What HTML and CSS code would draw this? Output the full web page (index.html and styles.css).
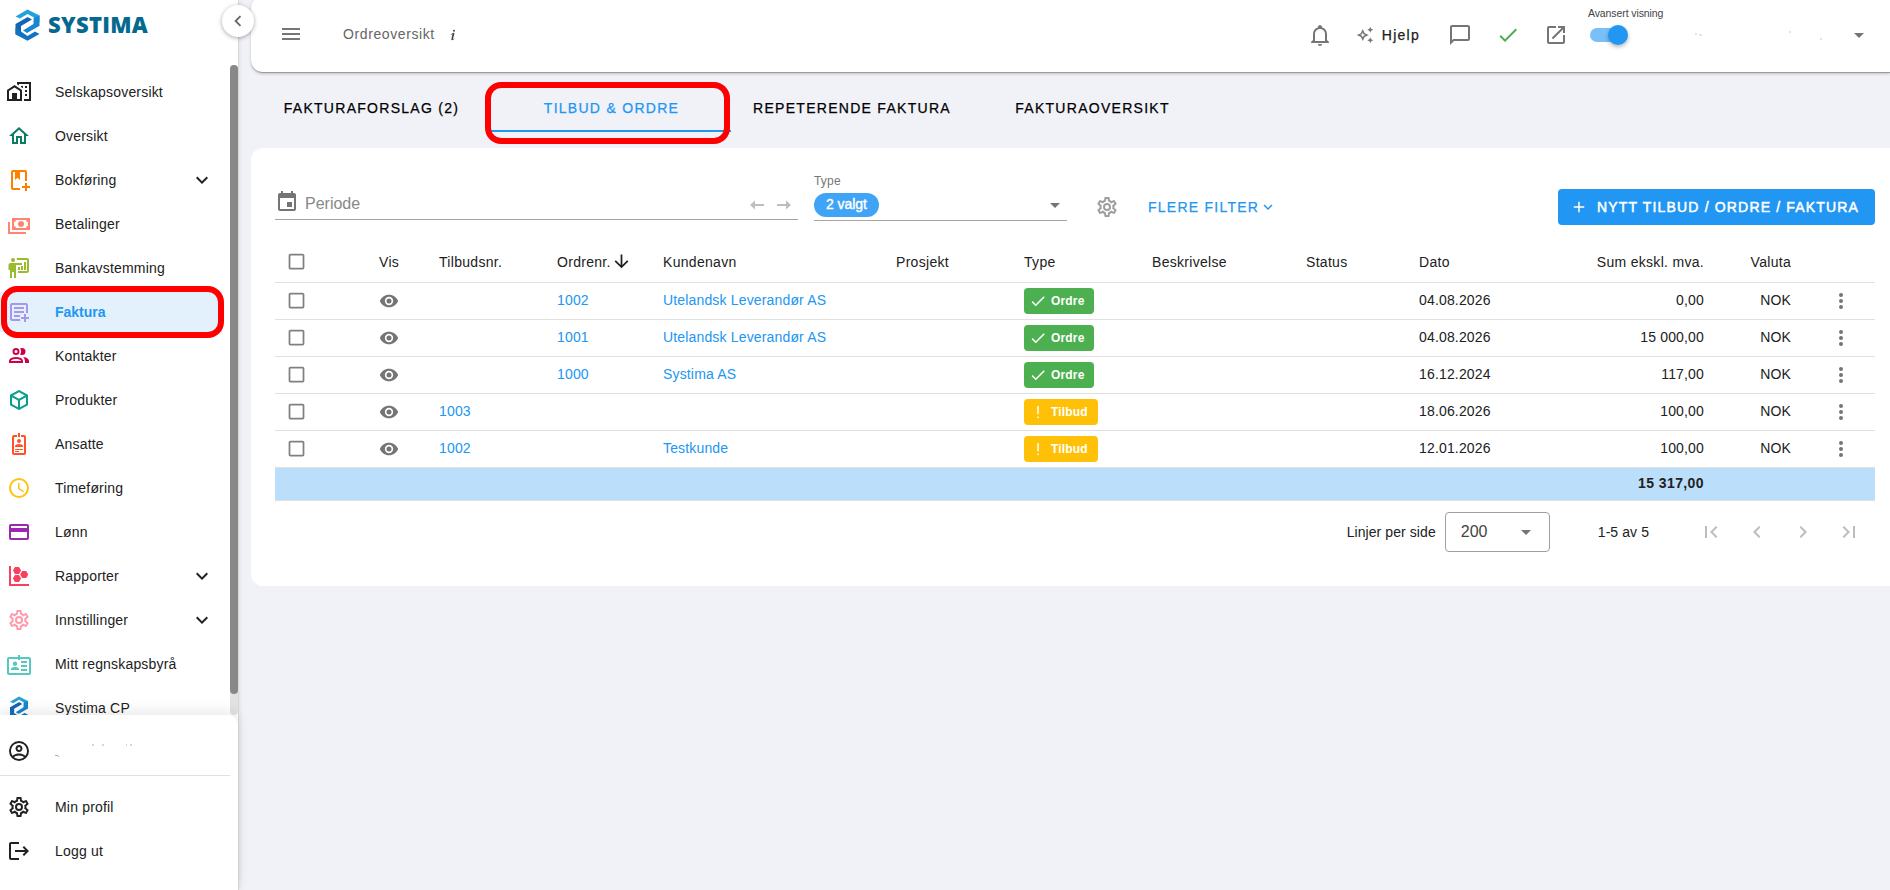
FILE: index.html
```html
<!DOCTYPE html>
<html lang="no">
<head>
    <meta charset="UTF-8">
    <meta name="viewport" content="width=device-width, initial-scale=1.0">
    <title>Systima - Ordreoversikt</title>
    <link rel="stylesheet" href="styles.css">
</head>
<body>

<!-- Icon sprite -->
<svg class="sprite" xmlns="http://www.w3.org/2000/svg">
    <symbol id="city" viewBox="0 0 24 24"><path d="M10 2V4.26L12 5.59V4H22V19H17V21H24V2H10M7.5 5L0 10V21H15V10L7.5 5M14 6V6.93L15.61 8H16V6H14M18 6V8H20V6H18M7.5 7.5L13 11V19H10V13H5V19H2V11L7.5 7.5M18 10V12H20V10H18M18 14V16H20V14H18Z"/></symbol>
    <symbol id="home" viewBox="0 0 24 24"><path d="M12 5.69L17 10.19V18H15V12H9V18H7V10.19L12 5.69M12 3L2 12H5V20H11V14H13V20H19V12H22"/></symbol>
    <symbol id="book" viewBox="0 0 24 24"><path d="M18 2H6C4.9 2 4 2.9 4 4V20C4 21.1 4.9 22 6 22H13V20H6V4H8V12L10.5 9.75L13 12V4H18V13H20V4C20 2.9 19.1 2 18 2M18 15V18H15V20H18V23H20V20H23V18H20V15Z"/></symbol>
    <symbol id="cash" viewBox="0 0 24 24"><path d="M5 6H23V18H5V6M14 9A3 3 0 0 1 17 12A3 3 0 0 1 14 15A3 3 0 0 1 11 12A3 3 0 0 1 14 9M9 8A2 2 0 0 1 7 10V14A2 2 0 0 1 9 16H19A2 2 0 0 1 21 14V10A2 2 0 0 1 19 8H9M1 10H3V20H19V22H1V10Z"/></symbol>
    <symbol id="board" viewBox="0 0 24 24"><path d="M20 17A2 2 0 0 0 22 15V4A2 2 0 0 0 20 2H9.46C9.81 2.61 10 3.3 10 4H20V15H11V17M15 7V9H9V22H7V16H5V22H3V14H1.5V9A2 2 0 0 1 3.5 7H15M8 4A2 2 0 0 1 6 6A2 2 0 0 1 4 4A2 2 0 0 1 6 2A2 2 0 0 1 8 4M17 6H19V14H17V6M14 10H16V14H14V10M11 11H13V14H11V11Z"/></symbol>
    <symbol id="invoice" viewBox="0 0 24 24"><path d="M5 3C3.9 3 3 3.9 3 5V19C3 20.1 3.9 21 5 21H13.35A6 6 0 0 1 13.09 19H5V5H19V13.09A6 6 0 0 1 21 13.35V5C21 3.9 20.1 3 19 3H5M7 7V9H17V7H7M7 11V13H17V11H7M7 15V17H13V15H7M17 14V17H14V19H17V22H19V19H22V17H19V14H17"/></symbol>
    <symbol id="people" viewBox="0 0 24 24"><path d="M13.07 10.41A5 5 0 0 0 13.07 4.59A3.39 3.39 0 0 1 15 4A3.5 3.5 0 0 1 15 11A3.39 3.39 0 0 1 13.07 10.41M5.5 7.5A3.5 3.5 0 1 1 9 11A3.5 3.5 0 0 1 5.5 7.5M7.5 7.5A1.5 1.5 0 1 0 9 6A1.5 1.5 0 0 0 7.5 7.5M16 17V19H2V17S2 13 9 13S16 17 16 17M14 17C13.86 16.22 12.67 15 9 15S4.07 16.31 4 17M15.95 13A5.32 5.32 0 0 1 18 17V19H22V17S22 13.37 15.94 13Z"/></symbol>
    <symbol id="cube" viewBox="0 0 24 24"><path d="M21 16.5C21 16.88 20.79 17.21 20.47 17.38L12.57 21.82C12.41 21.94 12.21 22 12 22C11.79 22 11.59 21.94 11.43 21.82L3.53 17.38C3.21 17.21 3 16.88 3 16.5V7.5C3 7.12 3.21 6.79 3.53 6.62L11.43 2.18C11.59 2.06 11.79 2 12 2C12.21 2 12.41 2.06 12.57 2.18L20.47 6.62C20.79 6.79 21 7.12 21 7.5V16.5M12 4.15L6.04 7.5L12 10.85L17.96 7.5L12 4.15M5 15.91L11 19.29V12.58L5 9.21V15.91M19 15.91V9.21L13 12.58V19.29L19 15.91Z"/></symbol>
    <symbol id="badge" viewBox="0 0 24 24"><path d="M17 3H14V5H17V21H7V5H10V3H7A2 2 0 0 0 5 5V21A2 2 0 0 0 7 23H17A2 2 0 0 0 19 21V5A2 2 0 0 0 17 3M12 7A2 2 0 0 1 14 9A2 2 0 0 1 12 11A2 2 0 0 1 10 9A2 2 0 0 1 12 7M16 15H8V14C8 12.67 10.67 12 12 12C13.33 12 16 12.67 16 14V15M16 18H8V17H16V18M12 20H8V19H12V20M13 5H11V1H13V5Z"/></symbol>
    <symbol id="clock" viewBox="0 0 24 24"><path d="M12 20A8 8 0 0 0 20 12A8 8 0 0 0 12 4A8 8 0 0 0 4 12A8 8 0 0 0 12 20M12 2A10 10 0 0 1 22 12A10 10 0 0 1 12 22A10 10 0 0 1 2 12A10 10 0 0 1 12 2M12.5 7V12.25L17 14.92L16.25 16.15L11 13V7H12.5Z"/></symbol>
    <symbol id="card" viewBox="0 0 24 24"><path d="M20 4H4C2.89 4 2 4.89 2 6V18C2 19.11 2.89 20 4 20H20C21.11 20 22 19.11 22 18V6C22 4.89 21.11 4 20 4M20 18H4V12H20V18M20 8H4V6H20V8Z"/></symbol>
    <symbol id="chart" viewBox="0 0 24 24"><path d="M2 2H4V20H22V22H2V2M14 14.5L12 18H7.94L5.92 14.5L7.94 11H12L14 14.5M14.08 6.5L12.06 10H8L6 6.5L8 3H12.06L14.08 6.5M21.25 10.5L19.23 14H15.19L13.17 10.5L15.19 7H19.23L21.25 10.5Z"/></symbol>
    <symbol id="cog" viewBox="0 0 24 24"><path d="M12 8A4 4 0 0 1 16 12A4 4 0 0 1 12 16A4 4 0 0 1 8 12A4 4 0 0 1 12 8M12 10A2 2 0 0 0 10 12A2 2 0 0 0 12 14A2 2 0 0 0 14 12A2 2 0 0 0 12 10M10 22C9.75 22 9.54 21.82 9.5 21.58L9.13 18.93C8.5 18.68 7.96 18.34 7.44 17.94L4.95 18.95C4.73 19.03 4.46 18.95 4.34 18.73L2.34 15.27C2.21 15.05 2.27 14.78 2.46 14.63L4.57 12.97L4.5 12L4.57 11L2.46 9.37C2.27 9.22 2.21 8.95 2.34 8.73L4.34 5.27C4.46 5.05 4.73 4.96 4.95 5.05L7.44 6.05C7.96 5.66 8.5 5.32 9.13 5.07L9.5 2.42C9.54 2.18 9.75 2 10 2H14C14.25 2 14.46 2.18 14.5 2.42L14.87 5.07C15.5 5.32 16.04 5.66 16.56 6.05L19.05 5.05C19.27 4.96 19.54 5.05 19.66 5.27L21.66 8.73C21.79 8.95 21.73 9.22 21.54 9.37L19.43 11L19.5 12L19.43 13L21.54 14.63C21.73 14.78 21.79 15.05 21.66 15.27L19.66 18.73C19.54 18.95 19.27 19.04 19.05 18.95L16.56 17.95C16.04 18.34 15.5 18.68 14.87 18.93L14.5 21.58C14.46 21.82 14.25 22 14 22H10M11.25 4L10.88 6.61C9.68 6.86 8.62 7.5 7.85 8.39L5.44 7.35L4.69 8.65L6.8 10.2C6.4 11.37 6.4 12.64 6.8 13.8L4.68 15.36L5.43 16.66L7.86 15.62C8.63 16.5 9.68 17.14 10.87 17.38L11.24 20H12.76L13.13 17.39C14.32 17.14 15.37 16.5 16.14 15.62L18.57 16.66L19.32 15.36L17.2 13.81C17.6 12.64 17.6 11.37 17.2 10.2L19.31 8.65L18.56 7.35L16.15 8.39C15.38 7.5 14.32 6.86 13.12 6.62L12.75 4H11.25Z"/></symbol>
    <symbol id="idcard" viewBox="0 0 24 24"><path d="M22 5H13V3H11V5H2A2 2 0 0 0 0 7V21A2 2 0 0 0 2 23H22A2 2 0 0 0 24 21V7A2 2 0 0 0 22 5M22 21H2V7H11V8H13V7H22V21M14 9H20V11H14V9M14 13H20V15H14V13M14 17H20V19H14V17M8 9.5A2.2 2.2 0 0 1 8 13.9A2.2 2.2 0 0 1 8 9.5M4 18V17C4 15.6 6.6 15 8 15S12 15.6 12 17V18H4Z"/></symbol>
    <symbol id="account" viewBox="0 0 24 24"><path d="M12 2A10 10 0 0 0 2 12A10 10 0 0 0 12 22A10 10 0 0 0 22 12A10 10 0 0 0 12 2M7.07 18.28C7.5 17.38 10.12 16.5 12 16.5C13.88 16.5 16.5 17.38 16.93 18.28C15.57 19.36 13.86 20 12 20C10.14 20 8.43 19.36 7.07 18.28M18.36 16.83C16.93 15.09 13.46 14.5 12 14.5C10.54 14.5 7.07 15.09 5.64 16.83C4.62 15.5 4 13.82 4 12C4 7.59 7.59 4 12 4C16.41 4 20 7.59 20 12C20 13.82 19.38 15.5 18.36 16.83M12 6C10.06 6 8.5 7.56 8.5 9.5C8.5 11.44 10.06 13 12 13C13.94 13 15.5 11.44 15.5 9.5C15.5 7.56 13.94 6 12 6M12 11A1.5 1.5 0 0 1 10.5 9.5A1.5 1.5 0 0 1 12 8A1.5 1.5 0 0 1 13.5 9.5A1.5 1.5 0 0 1 12 11Z"/></symbol>
    <symbol id="logout" viewBox="0 0 24 24"><path d="M17 7L15.59 8.41L18.17 11H8V13H18.17L15.59 15.58L17 17L22 12M4 5H12V3H4C2.9 3 2 3.9 2 5V19C2 20.1 2.9 21 4 21H12V19H4V5Z"/></symbol>
    <symbol id="bell" viewBox="0 0 24 24"><path d="M10 21H14C14 22.1 13.1 23 12 23S10 22.1 10 21M21 19V20H3V19L5 17V11C5 7.9 7.03 5.17 10 4.29V4C10 2.9 10.9 2 12 2S14 2.9 14 4V4.29C16.97 5.17 19 7.9 19 11V17L21 19M17 11C17 8.24 14.76 6 12 6S7 8.24 7 11V18H17V11Z"/></symbol>
    <symbol id="sparkle" viewBox="0 0 24 24"><path d="M9 4L11.5 9.5L17 12L11.5 14.5L9 20L6.5 14.5L1 12L6.5 9.5L9 4M9 8.8L8 11L5.8 12L8 13L9 15.2L10 13L12.2 12L10 11L9 8.8M19 1L20.2 3.8L23 5L20.2 6.2L19 9L17.8 6.2L15 5L17.8 3.8L19 1M19 15L20.2 17.8L23 19L20.2 20.2L19 23L17.8 20.2L15 19L17.8 17.8L19 15Z"/></symbol>
    <symbol id="message" viewBox="0 0 24 24"><path d="M20 2H4C2.9 2 2 2.9 2 4V22L6 18H20C21.1 18 22 17.1 22 16V4C22 2.9 21.1 2 20 2M20 16H5.17L4 17.17V4H20V16Z"/></symbol>
    <symbol id="check" viewBox="0 0 24 24"><path d="M21 7L9 19L3.5 13.5L4.91 12.09L9 16.17L19.59 5.59L21 7Z"/></symbol>
    <symbol id="open" viewBox="0 0 24 24"><path d="M14 3V5H17.59L7.76 14.83L9.17 16.24L19 6.41V10H21V3M19 19H5V5H12V3H5C3.89 3 3 3.9 3 5V19A2 2 0 0 0 5 21H19A2 2 0 0 0 21 19V12H19V19Z"/></symbol>
    <symbol id="left" viewBox="0 0 24 24"><path d="M15.41 16.58L10.83 12L15.41 7.41L14 6L8 12L14 18L15.41 16.58Z"/></symbol>
    <symbol id="right" viewBox="0 0 24 24"><path d="M8.59 16.58L13.17 12L8.59 7.41L10 6L16 12L10 18L8.59 16.58Z"/></symbol>
    <symbol id="down" viewBox="0 0 24 24"><path d="M7.41 8.58L12 13.17L16.59 8.58L18 10L12 16L6 10L7.41 8.58Z"/></symbol>
    <symbol id="first" viewBox="0 0 24 24"><path d="M18.41 16.59L13.82 12L18.41 7.41L17 6L11 12L17 18L18.41 16.59M6 6H8V18H6V6Z"/></symbol>
    <symbol id="last" viewBox="0 0 24 24"><path d="M5.59 7.41L10.18 12L5.59 16.59L7 18L13 12L7 6L5.59 7.41M16 6H18V18H16V6Z"/></symbol>
    <symbol id="caret" viewBox="0 0 24 24"><path d="M7 10L12 15L17 10H7Z"/></symbol>
    <symbol id="menu" viewBox="0 0 24 24"><path d="M3 6H21V8H3V6M3 11H21V13H3V11M3 16H21V18H3V16Z"/></symbol>
    <symbol id="info" viewBox="0 0 24 24"><path d="M13.5 4A1.5 1.5 0 0 0 12 5.5A1.5 1.5 0 0 0 13.5 7A1.5 1.5 0 0 0 15 5.5A1.5 1.5 0 0 0 13.5 4M13.14 8.77C11.95 8.87 8.7 11.46 8.7 11.46C8.5 11.61 8.56 11.6 8.72 11.88C8.88 12.15 8.86 12.17 9.05 12.04C9.25 11.91 9.58 11.7 10.13 11.36C12.25 10 10.47 13.14 9.56 18.43C9.2 21.05 11.56 19.7 12.17 19.3C12.77 18.91 14.38 17.8 14.54 17.69C14.76 17.54 14.6 17.42 14.43 17.17C14.31 17 14.19 17.12 14.19 17.12C13.54 17.55 12.35 18.45 12.19 17.88C12 17.31 13.22 13.4 13.89 10.71C14 10.07 14.3 8.67 13.14 8.77Z"/></symbol>
    <symbol id="prev" viewBox="0 0 16 16"><path d="M1 8L6 3.6V7H15V9H6V12.4Z"/></symbol>
    <symbol id="next" viewBox="0 0 16 16"><path d="M15 8L10 3.6V7H1V9H10V12.4Z"/></symbol>
    <symbol id="sort" viewBox="0 0 24 24"><path d="M11 4H13V16L18.5 10.5L19.92 11.92L12 19.84L4.08 11.92L5.5 10.5L11 16V4Z"/></symbol>
    <symbol id="calendar" viewBox="0 0 24 24"><path d="M19 19H5V8H19M16 1V3H8V1H6V3H5C3.89 3 3 3.89 3 5V19A2 2 0 0 0 5 21H19A2 2 0 0 0 21 19V5C21 3.89 20.1 3 19 3H18V1M17 12H12V17H17V12Z"/></symbol>
    <symbol id="plus" viewBox="0 0 24 24"><path d="M19 13H13V19H11V13H5V11H11V5H13V11H19V13Z"/></symbol>
    <symbol id="box" viewBox="0 0 24 24"><path d="M19 3H5C3.89 3 3 3.89 3 5V19A2 2 0 0 0 5 21H19A2 2 0 0 0 21 19V5C21 3.89 20.1 3 19 3M19 5V19H5V5H19Z"/></symbol>
    <symbol id="eye" viewBox="0 0 24 24"><path d="M12 9A3 3 0 0 0 9 12A3 3 0 0 0 12 15A3 3 0 0 0 15 12A3 3 0 0 0 12 9M12 17A5 5 0 0 1 7 12A5 5 0 0 1 12 7A5 5 0 0 1 17 12A5 5 0 0 1 12 17M12 4.5C7 4.5 2.73 7.61 1 12C2.73 16.39 7 19.5 12 19.5C17 19.5 21.27 16.39 23 12C21.27 7.61 17 4.5 12 4.5Z"/></symbol>
    <symbol id="dots" viewBox="0 0 24 24"><circle cx="12" cy="6" r="2"/><circle cx="12" cy="12" r="2"/><circle cx="12" cy="18" r="2"/></symbol>
    <symbol id="bang" viewBox="0 0 24 24"><path d="M11 4H13V15H11V4M13 18V20H11V18H13Z"/></symbol>
    <symbol id="systima" viewBox="0 0 25 32">
        <path fill="#22a3dd" d="M0.5 7.5L12.5 0.5L24.5 6.5V13L19 9.5V8.5L12.5 5L5 9.5Z"/>
        <path fill="#1787cf" d="M24.5 6.5V17L12 24L8 21.5L18.5 15V9Z"/>
        <path fill="#1565b5" d="M0.5 25V15L12.5 8L17 10.5L6 17V23Z"/>
        <path fill="#1273c4" d="M0.5 19L6 22.5L12.5 27L20 22.5L24.5 25L12.5 31.8L0.5 25.5Z"/>
        <path stroke="#fff" stroke-width="1" fill="none" d="M0.5 14L13 7L18.5 10.5M24.5 17.5L12 24.8L6 21"/>
    </symbol>
</svg>

<div class="app">
    <aside class="sidebar">
        <div class="logo">
            <svg class="logo-mark"><use href="#systima"/></svg>
            <span class="logo-text">SYSTIMA</span>
        </div>
        <button class="collapse"><svg class="icon"><use href="#left"/></svg></button>

        <nav class="nav">
            <a class="nav-item"><svg class="icon c-black"><use href="#city"/></svg><span>Selskapsoversikt</span></a>
            <a class="nav-item"><svg class="icon c-green"><use href="#home"/></svg><span>Oversikt</span></a>
            <a class="nav-item"><svg class="icon c-orange"><use href="#book"/></svg><span>Bokføring</span><svg class="icon chevron"><use href="#down"/></svg></a>
            <a class="nav-item"><svg class="icon c-salmon"><use href="#cash"/></svg><span>Betalinger</span></a>
            <a class="nav-item"><svg class="icon c-lime"><use href="#board"/></svg><span>Bankavstemming</span></a>
            <a class="nav-item active"><svg class="icon c-lilac"><use href="#invoice"/></svg><span>Faktura</span></a>
            <a class="nav-item"><svg class="icon c-crimson"><use href="#people"/></svg><span>Kontakter</span></a>
            <a class="nav-item"><svg class="icon c-teal"><use href="#cube"/></svg><span>Produkter</span></a>
            <a class="nav-item"><svg class="icon c-red"><use href="#badge"/></svg><span>Ansatte</span></a>
            <a class="nav-item"><svg class="icon c-yellow"><use href="#clock"/></svg><span>Timeføring</span></a>
            <a class="nav-item"><svg class="icon c-purple"><use href="#card"/></svg><span>Lønn</span></a>
            <a class="nav-item"><svg class="icon c-rose"><use href="#chart"/></svg><span>Rapporter</span><svg class="icon chevron"><use href="#down"/></svg></a>
            <a class="nav-item"><svg class="icon c-pink"><use href="#cog"/></svg><span>Innstillinger</span><svg class="icon chevron"><use href="#down"/></svg></a>
            <a class="nav-item"><svg class="icon c-aqua"><use href="#idcard"/></svg><span>Mitt regnskapsbyrå</span></a>
            <a class="nav-item"><svg class="icon"><use href="#systima"/></svg><span>Systima CP</span></a>
        </nav>
        <div class="scrollbar"><div class="thumb"></div></div>

        <div class="user-panel">
            <a class="nav-item user">
                <svg class="icon c-black"><use href="#account"/></svg>
                <svg class="user-name" viewBox="0 0 80 14"><path d="M0 11.5h2l2 1M37 1h2M47 1h2M71 1h1M75 1h2" stroke="#777" stroke-width="0.6" fill="none"/></svg>
            </a>
            <a class="nav-item"><svg class="icon c-black"><use href="#cog"/></svg><span>Min profil</span></a>
            <a class="nav-item"><svg class="icon c-black"><use href="#logout"/></svg><span>Logg ut</span></a>
        </div>
        <div class="marker marker-nav"></div>
    </aside>

    <main class="main">
        <header class="topbar">
            <svg class="icon menu"><use href="#menu"/></svg>
            <span class="page-title">Ordreoversikt</span>
            <svg class="icon info"><use href="#info"/></svg>
            <div class="actions">
                <svg class="icon"><use href="#bell"/></svg>
                <div class="help"><svg class="icon"><use href="#sparkle"/></svg><span>Hjelp</span></div>
                <svg class="icon message"><use href="#message"/></svg>
                <svg class="icon done"><use href="#check"/></svg>
                <svg class="icon"><use href="#open"/></svg>
                <div class="advanced">
                    <span class="advanced-label">Avansert visning</span>
                    <div class="switch"><div class="knob"></div></div>
                </div>
                <svg class="company" viewBox="0 0 140 14"><path d="M2 6h2M6 7h3M96 4h2M127 11h2" stroke="#bbb" stroke-width="0.8" fill="none"/></svg>
                <svg class="icon"><use href="#caret"/></svg>
            </div>
        </header>

        <div class="tabs">
            <div class="tab">FAKTURAFORSLAG (2)</div>
            <div class="tab tab-active">TILBUD &amp; ORDRE<div class="marker marker-tab"></div></div>
            <div class="tab tab-wide">REPETERENDE FAKTURA</div>
            <div class="tab">FAKTURAOVERSIKT</div>
        </div>

        <section class="card">
            <div class="filters">
                <div class="period">
                    <svg class="icon"><use href="#calendar"/></svg>
                    <span>Periode</span>
                    <svg class="arrow first-arrow"><use href="#prev"/></svg>
                    <svg class="arrow"><use href="#next"/></svg>
                </div>
                <div class="type">
                    <label>Type</label>
                    <div class="type-row">
                        <span class="count">2 valgt</span>
                        <svg class="icon"><use href="#caret"/></svg>
                    </div>
                </div>
                <svg class="icon settings"><use href="#cog"/></svg>
                <div class="more">FLERE FILTER<svg class="icon"><use href="#down"/></svg></div>
                <button class="new"><svg class="icon"><use href="#plus"/></svg>NYTT TILBUD / ORDRE / FAKTURA</button>
            </div>

            <table>
                <colgroup>
                    <col class="w-check"><col class="w-vis"><col class="w-offer"><col class="w-order"><col class="w-customer"><col class="w-project"><col class="w-type"><col class="w-desc"><col class="w-status"><col class="w-date"><col class="w-sum"><col class="w-currency"><col class="w-menu">
                </colgroup>
                <thead>
                    <tr>
                        <th><svg class="icon box"><use href="#box"/></svg></th>
                        <th>Vis</th>
                        <th>Tilbudsnr.</th>
                        <th><div class="sorted">Ordrenr.<svg class="icon"><use href="#sort"/></svg></div></th>
                        <th>Kundenavn</th>
                        <th>Prosjekt</th>
                        <th>Type</th>
                        <th>Beskrivelse</th>
                        <th>Status</th>
                        <th>Dato</th>
                        <th class="num">Sum ekskl. mva.</th>
                        <th class="num">Valuta</th>
                        <th></th>
                    </tr>
                </thead>
                <tbody>
                    <tr>
                        <td><svg class="icon box"><use href="#box"/></svg></td>
                        <td><svg class="icon eye"><use href="#eye"/></svg></td>
                        <td></td>
                        <td><a>1002</a></td>
                        <td><a>Utelandsk Leverandør AS</a></td>
                        <td></td>
                        <td><span class="chip order"><svg class="icon"><use href="#check"/></svg>Ordre</span></td>
                        <td></td>
                        <td></td>
                        <td>04.08.2026</td>
                        <td class="num">0,00</td>
                        <td class="num">NOK</td>
                        <td><svg class="icon dots"><use href="#dots"/></svg></td>
                    </tr>
                    <tr>
                        <td><svg class="icon box"><use href="#box"/></svg></td>
                        <td><svg class="icon eye"><use href="#eye"/></svg></td>
                        <td></td>
                        <td><a>1001</a></td>
                        <td><a>Utelandsk Leverandør AS</a></td>
                        <td></td>
                        <td><span class="chip order"><svg class="icon"><use href="#check"/></svg>Ordre</span></td>
                        <td></td>
                        <td></td>
                        <td>04.08.2026</td>
                        <td class="num">15 000,00</td>
                        <td class="num">NOK</td>
                        <td><svg class="icon dots"><use href="#dots"/></svg></td>
                    </tr>
                    <tr>
                        <td><svg class="icon box"><use href="#box"/></svg></td>
                        <td><svg class="icon eye"><use href="#eye"/></svg></td>
                        <td></td>
                        <td><a>1000</a></td>
                        <td><a>Systima AS</a></td>
                        <td></td>
                        <td><span class="chip order"><svg class="icon"><use href="#check"/></svg>Ordre</span></td>
                        <td></td>
                        <td></td>
                        <td>16.12.2024</td>
                        <td class="num">117,00</td>
                        <td class="num">NOK</td>
                        <td><svg class="icon dots"><use href="#dots"/></svg></td>
                    </tr>
                    <tr>
                        <td><svg class="icon box"><use href="#box"/></svg></td>
                        <td><svg class="icon eye"><use href="#eye"/></svg></td>
                        <td><a>1003</a></td>
                        <td></td>
                        <td></td>
                        <td></td>
                        <td><span class="chip offer"><svg class="icon"><use href="#bang"/></svg>Tilbud</span></td>
                        <td></td>
                        <td></td>
                        <td>18.06.2026</td>
                        <td class="num">100,00</td>
                        <td class="num">NOK</td>
                        <td><svg class="icon dots"><use href="#dots"/></svg></td>
                    </tr>
                    <tr>
                        <td><svg class="icon box"><use href="#box"/></svg></td>
                        <td><svg class="icon eye"><use href="#eye"/></svg></td>
                        <td><a>1002</a></td>
                        <td></td>
                        <td><a>Testkunde</a></td>
                        <td></td>
                        <td><span class="chip offer"><svg class="icon"><use href="#bang"/></svg>Tilbud</span></td>
                        <td></td>
                        <td></td>
                        <td>12.01.2026</td>
                        <td class="num">100,00</td>
                        <td class="num">NOK</td>
                        <td><svg class="icon dots"><use href="#dots"/></svg></td>
                    </tr>
                    <tr class="total">
                        <td colspan="10"></td>
                        <td class="num">15 317,00</td>
                        <td colspan="2"></td>
                    </tr>
                </tbody>
            </table>

            <div class="pager">
                <span class="per-page">Linjer per side</span>
                <div class="select"><span>200</span><svg class="icon"><use href="#caret"/></svg></div>
                <span class="range">1-5 av 5</span>
                <div class="page-buttons">
                    <svg class="icon"><use href="#first"/></svg>
                    <svg class="icon"><use href="#left"/></svg>
                    <svg class="icon"><use href="#right"/></svg>
                    <svg class="icon"><use href="#last"/></svg>
                </div>
            </div>
        </section>
    </main>
</div>

</body>
</html>
```
FILE: styles.css
```css
* {
    box-sizing: border-box;
}
body {
    margin: 0;
    font-family: "Liberation Sans", Arial, sans-serif;
    font-size: 14px;
    color: #212121;
    background-color: #f1f2f8;
}
button {
    font-family: inherit;
    border: none;
}
.sprite {
    display: none;
}
.icon {
    display: block;
    flex: none;
    width: 24px;
    height: 24px;
    fill: currentColor;
    fill-rule: evenodd;
}
.app {
    display: flex;
    height: 890px;
    overflow: hidden;
}

/* Sidebar */
.sidebar {
    position: relative;
    display: flex;
    flex-direction: column;
    flex: none;
    width: 239px;
    background-color: #fff;
    border-right: 1px solid #d9d9dc;
    box-shadow: 1px 0 4px rgba(0, 0, 0, 0.08);
}
.logo {
    display: flex;
    align-items: center;
    height: 70px;
    padding: 0 0 20px 15px;
    flex: none;
}
.logo-mark {
    width: 25px;
    height: 32px;
}
.logo-text {
    margin-left: 8px;
    font-family: "Open Sans", sans-serif;
    font-size: 22px;
    font-weight: 800;
    line-height: 30px;
    padding-bottom: 2px;
    letter-spacing: 0.3px;
    color: #05688f;
}
.collapse {
    position: absolute;
    top: 5px;
    right: -16px;
    z-index: 3;
    display: flex;
    align-items: center;
    justify-content: center;
    width: 32px;
    height: 32px;
    padding: 0;
    border-radius: 50%;
    background-color: #fff;
    color: #666;
    box-shadow: 0 1px 4px rgba(0, 0, 0, 0.35);
}
.collapse .icon {
    width: 22px;
    height: 22px;
}
.nav {
    height: 645px;
    overflow: hidden;
    padding-top: 2px;
    flex: none;
}
.nav-item {
    display: flex;
    align-items: center;
    width: 222px;
    height: 40px;
    margin-bottom: 4px;
    padding: 0 8px 0 7px;
    letter-spacing: 0.18px;
}
.nav-item span {
    margin-left: 24px;
}
.nav-item.active {
    background-color: #e3f1fd;
    color: #2196f3;
    font-weight: bold;
    letter-spacing: 0;
}
.chevron {
    width: 24px;
    margin-left: auto;
}
.scrollbar {
    position: absolute;
    top: 65px;
    right: 0;
    width: 8px;
    height: 650px;
    border-radius: 4px;
    background-color: #e2e2e2;
}
.thumb {
    height: 629px;
    border-radius: 4px;
    background-color: #888;
}
.user-panel {
    position: relative;
    height: 175px;
    padding-top: 17px;
    background-color: #fff;
    border-top-right-radius: 10px;
    box-shadow: 0 -4px 14px rgba(0, 0, 0, 0.09);
}
.user-panel .user {
    width: 230px;
    height: 44px;
    margin-bottom: 11px;
    padding-bottom: 5px;
    border-bottom: 1px solid #e0e0e0;
}
.user-name {
    width: 80px;
    height: 14px;
    margin-left: 24px;
}
.c-black { color: #212121; }
.c-green { color: #0b7d63; }
.c-orange { color: #ff8000; }
.c-salmon { color: #ff8573; }
.c-lime { color: #9abb2d; }
.c-lilac { color: #a497ec; }
.c-crimson { color: #cf004b; }
.c-teal { color: #089f8c; }
.c-red { color: #ff5226; }
.c-yellow { color: #ffc20e; }
.c-purple { color: #9c27b0; }
.c-rose { color: #f8405f; }
.c-pink { color: #ff9cab; }
.c-aqua { color: #56c9bf; }

/* Red highlight frames */
.marker {
    position: absolute;
    z-index: 2;
    border: 6px solid #f00;
    border-radius: 16px;
}
.marker-nav {
    top: 286px;
    left: 1px;
    width: 223px;
    height: 52px;
}
.marker-tab {
    top: -4px;
    left: -6px;
    width: 245px;
    height: 62px;
}

/* Top bar */
.main {
    flex: 1;
    min-width: 0;
    padding-left: 12px;
}
.topbar {
    display: flex;
    align-items: center;
    height: 77px;
    margin-top: -4px;
    padding: 0 19px 0 28px;
    background-color: #fff;
    border-bottom: 1px solid #9a9a9d;
    border-radius: 12px 0 0 12px;
    box-shadow: 0 1px 3px rgba(0, 0, 0, 0.2);
    color: #757575;
}
.page-title {
    margin-left: 40px;
    color: #666;
    letter-spacing: 0.6px;
}
.topbar .info {
    width: 16px;
    height: 16px;
    margin: 1px 0 0 10px;
    color: #444;
}
.actions {
    display: flex;
    align-items: center;
    margin: 1px 0 0 auto;
}
.help {
    display: flex;
    align-items: center;
    margin-left: 24px;
    color: #212121;
    letter-spacing: 1.25px;
    -webkit-text-stroke: 0.25px #212121;
}
.help .icon {
    width: 18px;
    height: 18px;
    margin-right: 8px;
    color: #757575;
    stroke: none;
}
.message {
    margin-left: 28px;
}
.done {
    margin: 0 24px;
    color: #4caf50;
}
.advanced {
    position: relative;
    width: 76px;
    height: 24px;
    margin-left: 20px;
}
.advanced-label {
    position: absolute;
    top: -17px;
    left: 0;
    white-space: nowrap;
    font-size: 10.5px;
    line-height: 14px;
    letter-spacing: -0.1px;
    color: #444;
}
.switch {
    display: flex;
    align-items: center;
    justify-content: flex-end;
    width: 36px;
    height: 14px;
    margin: 5px 0 0 2px;
    border-radius: 7px;
    background-color: #7ac0f8;
}
.knob {
    flex: none;
    width: 20px;
    height: 20px;
    margin-right: -2px;
    border-radius: 50%;
    background-color: #2196f3;
    box-shadow: 0 2px 4px rgba(0, 0, 0, 0.3);
}
.company {
    width: 140px;
    height: 14px;
    margin: 0 14px 0 29px;
}

/* Tabs */
.tabs {
    display: flex;
    height: 62px;
    margin-top: 13px;
    color: #000;
    letter-spacing: 1.28px;
    -webkit-text-stroke: 0.25px currentColor;
}
.tab {
    position: relative;
    display: flex;
    align-items: center;
    justify-content: center;
    width: 240px;
    height: 46px;
    padding: 0 0 2px 1px;
}
.tab-active {
    border-bottom: 2px solid #2196f3;
    padding: 0 0 0 1px;
    color: #2196f3;
}
.tab-wide {
    width: 241px;
}

/* Card */
.card {
    height: 438px;
    padding: 0 15px 0 24px;
    background-color: #fff;
    border-radius: 12px 0 0 12px;
}
.filters {
    display: flex;
    height: 93px;
}
.period {
    display: flex;
    align-items: center;
    width: 523px;
    height: 31px;
    margin-top: 41px;
    padding: 0 6px 5px 0;
    border-bottom: 1px solid #a5a5a5;
    color: #757575;
    font-size: 16px;
}
.period span {
    margin-left: 6px;
    color: #888;
    padding-top: 4px;
}
.arrow {
    width: 16px;
    height: 16px;
    margin: 7px 0 0 11px;
    fill: #bdbdbd;
}
.first-arrow {
    margin-left: auto;
}
.period .icon {
    margin-top: 1px;
}
.type {
    width: 253px;
    height: 48px;
    margin: 25px 0 0 16px;
    border-bottom: 1px solid #a5a5a5;
}
.type label {
    display: block;
    height: 20px;
    font-size: 12px;
    line-height: 16px;
    letter-spacing: 0.2px;
    color: #777;
}
.type-row {
    display: flex;
    align-items: center;
    justify-content: space-between;
    height: 24px;
    color: #757575;
}
.count {
    height: 24px;
    padding: 0 12px;
    border-radius: 12px;
    background-color: #3fa3f6;
    color: #fff;
    line-height: 23px;
    -webkit-text-stroke: 0.4px #fff;
    letter-spacing: -0.05px;
}
.settings {
    margin: 47px 0 0 28px;
    color: #9e9e9e;
}
.more {
    display: flex;
    align-items: center;
    height: 20px;
    margin: 49px 0 0 29px;
    color: #2196f3;
    letter-spacing: 1.25px;
    -webkit-text-stroke: 0.25px #2196f3;
}
.more .icon {
    width: 18px;
    height: 18px;
}
.new {
    display: flex;
    align-items: center;
    width: 317px;
    height: 36px;
    margin: 41px 0 0 auto;
    padding: 0 0 0 12px;
    border-radius: 4px;
    background-color: #2196f3;
    color: #fff;
    font-size: 14px;
    letter-spacing: 1.17px;
    white-space: nowrap;
    -webkit-text-stroke: 0.5px #fff;
}
.new .icon {
    width: 18px;
    height: 18px;
    margin-right: 9px;
}

/* Table */
table {
    width: 1600px;
    table-layout: fixed;
    border-collapse: separate;
    border-spacing: 0;
}
th, td {
    height: 37px;
    padding: 0 14px;
    border-bottom: 1px solid #e0e0e0;
    text-align: left;
    font-weight: normal;
    letter-spacing: 0.16px;
    white-space: nowrap;
}
td {
    padding-bottom: 2px;
}
th {
    height: 42px;
    letter-spacing: 0.3px;
}
td a {
    color: #2196f3;
}
th.num, td.num {
    text-align: right;
}
.w-check { width: 90px; }
.w-vis { width: 60px; }
.w-offer { width: 118px; }
.w-order { width: 106px; }
.w-customer { width: 233px; }
.w-project { width: 128px; }
.w-type { width: 128px; }
.w-desc { width: 154px; }
.w-status { width: 113px; }
.w-date { width: 155px; }
.w-sum { width: 158px; }
.w-currency { width: 87px; }
.w-menu { width: 70px; }
.box {
    width: 21px;
    height: 21px;
    margin-left: -3px;
    color: #808080;
}
.eye {
    width: 20px;
    height: 20px;
    margin-top: 1px;
    color: #757575;
}
.dots {
    color: #757575;
    margin: 2px 0 0 10px;
}
.sorted {
    display: flex;
    align-items: center;
}
.sorted .icon {
    width: 21px;
    height: 21px;
    margin-left: 0;
}
.chip {
    display: inline-flex;
    align-items: center;
    height: 26px;
    margin-top: 2px;
    padding: 0 10px 0 5px;
    border-radius: 4px;
    color: #fff;
    font-size: 12px;
    font-weight: bold;
    vertical-align: middle;
}
.chip .icon {
    width: 18px;
    height: 18px;
    margin-right: 4px;
}
.order {
    background-color: #4caf50;
}
.offer {
    background-color: #ffc107;
}
.total td {
    height: 33px;
    background-color: #bbdefb;
    font-weight: bold;
    letter-spacing: 0.4px;
}

/* Pager */
.pager {
    display: flex;
    align-items: center;
    justify-content: flex-end;
    height: 40px;
    margin-top: 11px;
}
.per-page, .range {
    padding-bottom: 1px;
    letter-spacing: 0.08px;
}
.select {
    display: flex;
    align-items: center;
    justify-content: space-between;
    width: 105px;
    height: 40px;
    margin: 0 48px 0 9px;
    padding: 0 11px 0 15px;
    border: 1px solid #a0a0a0;
    border-radius: 4px;
    color: #444;
    font-size: 16px;
}
.select .icon {
    color: #757575;
}
.page-buttons {
    display: flex;
    gap: 22px;
    margin: 0 14px 0 50px;
    color: #bdbdbd;
}
```
